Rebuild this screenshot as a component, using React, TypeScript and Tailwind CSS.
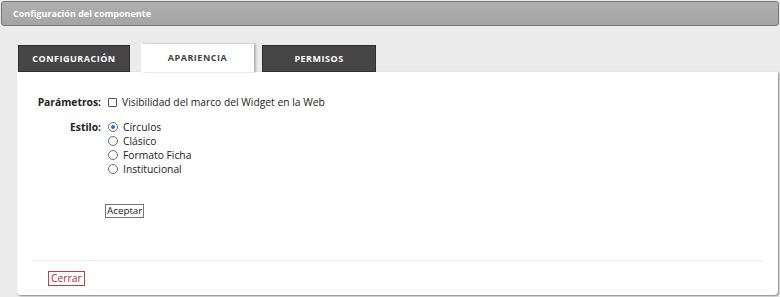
const estilos = ["Círculos", "Clásico", "Formato Ficha", "Institucional"];

const Radio = ({ checked }: { checked?: boolean }) => (
  <span className="w-[10px] h-[10px] rounded-full border border-[#6b6b6b] flex items-center justify-center shrink-0 bg-white">
    {checked && <span className="w-[4px] h-[4px] rounded-full bg-[#1a6fd1]" />}
  </span>
);

export default function App() {
  return (
    <div className="w-[780px] h-[297px] bg-[#ebebeb] font-['Open_Sans','Noto_Sans',sans-serif] text-[10.3px] text-[#222] overflow-hidden relative">
      {/* Header */}
      <div className="mx-[1px] mt-[1px] h-[25px] rounded-[3px] border border-[#777] bg-gradient-to-b from-[#b0b0b0] to-[#a4a4a4] flex items-center pl-[11px]">
        <span className="text-white font-bold text-[9px]">Configuración del componente</span>
      </div>

      {/* Tabs */}
      <div className="flex items-end pl-[18px] mt-[18px] h-[28px]">
        <div className="w-[112px] h-[27px] bg-[#454545] border border-[#2f2f2f] flex items-center justify-center text-white font-bold text-[9px] tracking-[0.5px]">
          CONFIGURACIÓN
        </div>
        <div className="w-[113px] h-[28px] ml-[11px] bg-white shadow-[2px_0_2px_rgba(0,0,0,0.25)] flex items-center justify-center text-[#444] font-bold text-[9px] tracking-[0.5px] relative z-10">
          APARIENCIA
        </div>
        <div className="w-[114px] h-[27px] ml-[8px] bg-[#454545] border border-[#2f2f2f] flex items-center justify-center text-white font-bold text-[9px] tracking-[0.5px]">
          PERMISOS
        </div>
      </div>

      {/* Panel */}
      <div className="ml-[17px] mr-[2px] h-[223px] bg-white rounded-b-[4px] shadow-[1px_1px_2px_rgba(0,0,0,0.45)] flex flex-col">
        <div className="flex-1 pt-[23px]">
          <div className="flex items-center">
            <span className="w-[84px] text-right font-bold">Parámetros:</span>
            <span className="ml-[7px] w-[9px] h-[9px] border border-[#555] rounded-[1px] shrink-0" />
            <span className="ml-[5px]">Visibilidad del marco del Widget en la Web</span>
          </div>
          <div className="flex mt-[10px]">
            <span className="w-[84px] text-right font-bold leading-[14px]">Estilo:</span>
            <div className="ml-[7px] flex flex-col">
              {estilos.map((e, i) => (
                <label key={e} className="flex items-center gap-[5px] h-[14px]">
                  <Radio checked={i === 0} />
                  <span>{e}</span>
                </label>
              ))}
            </div>
          </div>
          <div className="mt-[27px] ml-[88px]">
            <button className="h-[14px] px-[1px] border border-[#777] text-[9.8px] leading-[12px] text-[#222] bg-white">
              Aceptar
            </button>
          </div>
        </div>
        <div className="mx-[15px] border-t border-[#ececec]" />
        <div className="h-[34px] pl-[31px] flex items-center">
          <button className="h-[15px] px-[2px] border border-[#b64444] text-[#b03030] text-[10.3px] leading-[13px] bg-white">
            Cerrar
          </button>
        </div>
      </div>
    </div>
  );
}
